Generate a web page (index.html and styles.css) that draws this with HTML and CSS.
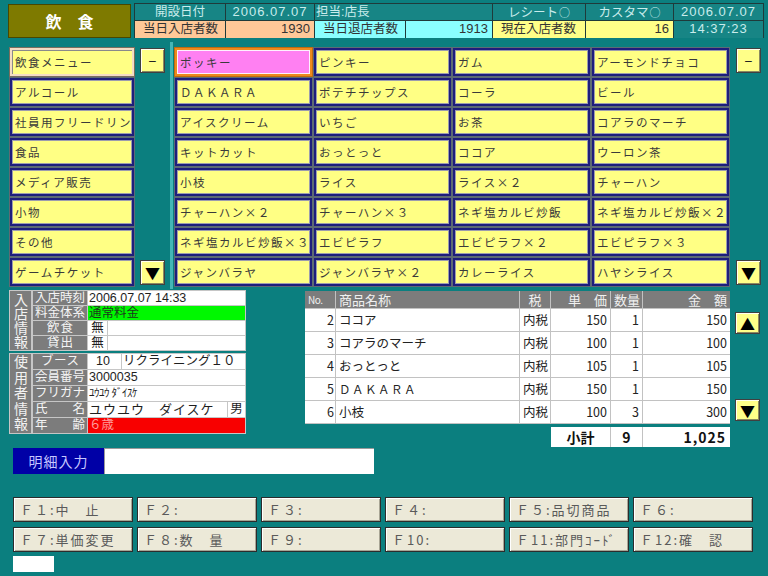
FILE: index.html
```html
<!DOCTYPE html>
<html lang="ja">
<head>
<meta charset="utf-8">
<title>飲食</title>
<link rel="stylesheet" href="styles.css">
</head>
<body>
<div class="screen">
  <header class="top">
    <div class="title">飲　食</div>
    <div class="stats">
      <div class="c teal">開設日付</div>
      <div class="c teal date">2006.07.07</div>
      <div class="c teal tight span2">担当:店長</div>
      <div class="c teal">レシート<span class="circ">○</span></div>
      <div class="c teal">カスタマ<span class="circ">○</span></div>
      <div class="c teal date">2006.07.07</div>
      <div class="c peach left">当日入店者数</div>
      <div class="c peach num">1930</div>
      <div class="c cyan left">当日退店者数</div>
      <div class="c cyan num">1913</div>
      <div class="c yellow left">現在入店者数</div>
      <div class="c yellow num">16</div>
      <div class="c teal date">14:37:23</div>
    </div>
  </header>

  <section class="menu-area">
    <div class="cats">
      <div class="btn cat-sel">飲食メニュー</div>
      <div class="btn">アルコール</div>
      <div class="btn">社員用フリードリンク</div>
      <div class="btn">食品</div>
      <div class="btn">メディア販売</div>
      <div class="btn">小物</div>
      <div class="btn">その他</div>
      <div class="btn">ゲームチケット</div>
    </div>
    <div class="mini-col">
      <div class="mini">−</div>
      <div class="mini arrow">▼</div>
    </div>
    <div class="sep"></div>
    <div class="products">
      <div class="btn sel">ポッキー</div>
      <div class="btn">ピンキー</div>
      <div class="btn">ガム</div>
      <div class="btn">アーモンドチョコ</div>
      <div class="btn">ＤＡＫＡＲＡ</div>
      <div class="btn">ポテチチップス</div>
      <div class="btn">コーラ</div>
      <div class="btn">ビール</div>
      <div class="btn">アイスクリーム</div>
      <div class="btn">いちご</div>
      <div class="btn">お茶</div>
      <div class="btn">コアラのマーチ</div>
      <div class="btn">キットカット</div>
      <div class="btn">おっとっと</div>
      <div class="btn">ココア</div>
      <div class="btn">ウーロン茶</div>
      <div class="btn">小枝</div>
      <div class="btn">ライス</div>
      <div class="btn">ライス×２</div>
      <div class="btn">チャーハン</div>
      <div class="btn">チャーハン×２</div>
      <div class="btn">チャーハン×３</div>
      <div class="btn">ネギ塩カルビ炒飯</div>
      <div class="btn">ネギ塩カルビ炒飯×２</div>
      <div class="btn">ネギ塩カルビ炒飯×３</div>
      <div class="btn">エビピラフ</div>
      <div class="btn">エビピラフ×２</div>
      <div class="btn">エビピラフ×３</div>
      <div class="btn">ジャンバラヤ</div>
      <div class="btn">ジャンバラヤ×２</div>
      <div class="btn">カレーライス</div>
      <div class="btn">ハヤシライス</div>
    </div>
    <div class="mini-col right">
      <div class="mini">−</div>
      <div class="mini arrow">▼</div>
    </div>
  </section>

  <section class="middle">
    <div class="info">
      <div class="panel p1">
        <div class="vlabel"><span class="vtext">入店情報</span></div>
        <div class="rows">
          <div class="row"><div class="lab">入店時刻</div><div class="val">2006.07.07 14:33</div></div>
          <div class="row"><div class="lab">料金体系</div><div class="val green">通常料金</div></div>
          <div class="row"><div class="lab narrow">飲食</div><div class="val box">無</div><div class="val"></div></div>
          <div class="row"><div class="lab narrow">貸出</div><div class="val box">無</div><div class="val"></div></div>
        </div>
      </div>
      <div class="panel p2">
        <div class="vlabel"><span class="vtext">使用者情報</span></div>
        <div class="rows">
          <div class="row"><div class="lab mid">ブース</div><div class="val booth">10</div><div class="val">リクライニング１０</div></div>
          <div class="row"><div class="lab">会員番号</div><div class="val">3000035</div></div>
          <div class="row"><div class="lab">フリガナ</div><div class="val kana">ﾕｳﾕｳ ﾀﾞｲｽｹ</div></div>
          <div class="row"><div class="lab">氏　名</div><div class="val name">ユウユウ　ダイスケ</div><div class="val sex">男</div></div>
          <div class="row"><div class="lab">年　齢</div><div class="val red">６歳</div></div>
        </div>
      </div>
    </div>

    <div class="order">
      <div class="tgrid">
        <div class="th small">No.</div>
        <div class="th lt">商品名称</div>
        <div class="th ctr">税</div>
        <div class="th rt">単　価</div>
        <div class="th ctr">数量</div>
        <div class="th rt">金　額</div>

        <div class="td rt">2</div><div class="td">ココア</div><div class="td ctr">内税</div><div class="td rt">150</div><div class="td rt">1</div><div class="td rt">150</div>
        <div class="td rt">3</div><div class="td">コアラのマーチ</div><div class="td ctr">内税</div><div class="td rt">100</div><div class="td rt">1</div><div class="td rt">100</div>
        <div class="td rt">4</div><div class="td">おっとっと</div><div class="td ctr">内税</div><div class="td rt">105</div><div class="td rt">1</div><div class="td rt">105</div>
        <div class="td rt">5</div><div class="td spaced">ＤＡＫＡＲＡ</div><div class="td ctr">内税</div><div class="td rt">150</div><div class="td rt">1</div><div class="td rt">150</div>
        <div class="td rt">6</div><div class="td">小枝</div><div class="td ctr">内税</div><div class="td rt">100</div><div class="td rt">3</div><div class="td rt">300</div>
      </div>
      <div class="sub">
        <div class="sc ctr">小計</div>
        <div class="sc ctr">9</div>
        <div class="sc rt">1,025</div>
      </div>
    </div>

    <div class="obtns">
      <div class="mini arrow">▲</div>
      <div class="mini arrow">▼</div>
    </div>
  </section>

  <div class="detail">
    <div class="dlabel">明細入力</div>
    <div class="dinput"></div>
  </div>

  <div class="fkeys">
    <div class="fk">Ｆ１:中　止</div>
    <div class="fk">Ｆ２:</div>
    <div class="fk">Ｆ３:</div>
    <div class="fk">Ｆ４:</div>
    <div class="fk">Ｆ５:品切商品</div>
    <div class="fk">Ｆ６:</div>
    <div class="fk">Ｆ７:単価変更</div>
    <div class="fk">Ｆ８:数　量</div>
    <div class="fk">Ｆ９:</div>
    <div class="fk">Ｆ10:</div>
    <div class="fk">Ｆ11:部門ｺｰﾄﾞ</div>
    <div class="fk">Ｆ12:確　認</div>
  </div>

  <div class="status"></div>
</div>
</body>
</html>
```

FILE: styles.css
```css
* { box-sizing: border-box; margin: 0; padding: 0; }

html, body { width: 768px; height: 576px; overflow: hidden; }

body {
  background: #0b7f7f;
  font-family: "Noto Sans CJK JP", "Noto Sans", sans-serif;
  font-size: 12px;
  color: #333;
}

.screen {
  width: 768px;
  height: 576px;
  padding-top: 3px;
  display: flex;
  flex-direction: column;
}

/* ---------- header ---------- */
.top {
  display: flex;
  gap: 3px;
  margin-left: 8px;
  height: 35px;
}

.title {
  width: 123px;
  height: 34px;
  margin-top: 1px;
  background: #7e7a00;
  border: 1px solid #4a4700;
  color: #fff;
  font-weight: bold;
  font-size: 16px;
  display: flex;
  align-items: center;
  justify-content: center;
}

.stats {
  display: grid;
  grid-template-columns: 90px 88px 90px 86px 92px 87px 89px;
  grid-template-rows: 16px 17px;
  gap: 1px;
  background: #1f3a3a;
  border: 1px solid #1f3a3a;
  font-family: "Liberation Sans", "Noto Sans CJK JP", sans-serif;
}

.c {
  font-size: 12.5px;
  line-height: 16px;
  white-space: nowrap;
  padding: 0 4px;
}
.c.span2 { grid-column: span 2; }
.circ { font-family: "Noto Sans CJK JP", sans-serif; font-size: 11px; margin-left: 1px; }
.teal { background: #178585; color: #c9ecec; text-align: center; }
.teal.tight { text-align: left; padding-left: 1px; }
.date { letter-spacing: 1px; font-size: 13px; padding: 0 2px; }
.peach { background: #ffc898; }
.cyan { background: #8affff; }
.yellow { background: #ffff88; }
.left { text-align: left; padding-left: 8px; }
.num { text-align: right; font-size: 13px; }

/* ---------- menu buttons ---------- */
.menu-area {
  display: flex;
  margin-top: 10px;
  padding-left: 10px;
  height: 238px;
}

.cats {
  width: 124px;
  display: grid;
  grid-template-rows: repeat(8, 28px);
  gap: 2px;
}

.products {
  margin-left: 2px;
  display: grid;
  grid-template-columns: repeat(4, 137px);
  grid-template-rows: repeat(8, 28px);
  gap: 2px;
}

.btn {
  background: #ffff84;
  border: 2px solid #1e1e7c;
  box-shadow: inset 0 0 0 1px #9c9cae, 0 0 0 1px #5d6b74;
  color: #3a3a3a;
  font-size: 11.5px;
  letter-spacing: 1.5px;
  line-height: 24px;
  padding-left: 3px;
  white-space: nowrap;
  overflow: hidden;
}

.btn.sel {
  background: #ff80f2;
  border: 2px solid #ee8a1c;
  box-shadow: inset 0 0 0 1px #fff0ff, 0 0 0 1px #c06a10;
}

.btn.cat-sel {
  border: 2px solid #f3dcc4;
  box-shadow: inset 1px 1px 0 #8a8a8a, 0 0 0 1px #7a6e5e;
}

.mini-col {
  width: 25px;
  margin-left: 6px;
  display: flex;
  flex-direction: column;
  justify-content: space-between;
  padding-bottom: 1px;
}
.mini-col.right { margin-left: 7px; }

.mini {
  height: 25px;
  background: #ffff88;
  border: 1px solid #404040;
  box-shadow: inset 1px 1px 0 #fffff0, inset -1px -1px 0 #8a8a60;
  color: #222;
  font-size: 14px;
  display: flex;
  align-items: center;
  justify-content: center;
}
.mini.arrow { font-size: 15px; color: #000; }

.sep {
  width: 3px;
  margin-left: 5px;
  margin-top: -6px;
  margin-bottom: -3px;
  background: #44b6b6;
}

/* ---------- middle ---------- */
.middle {
  display: flex;
  margin-top: 4px;
  height: 155px;
}

.info {
  margin-left: 9px;
  width: 237px;
  display: flex;
  flex-direction: column;
  gap: 2px;
  font-family: "Liberation Sans", "Noto Sans CJK JP", sans-serif;
}

.panel {
  display: flex;
  gap: 2px;
  padding: 1px;
  background: #c6c6c6;
}

.vlabel {
  width: 21px;
  background: #7c7c7c;
  display: flex;
  align-items: center;
  justify-content: center;
}

.vtext {
  writing-mode: vertical-rl;
  text-orientation: upright;
  color: #f2f2f2;
  font-family: "Noto Sans CJK JP", sans-serif;
  font-size: 14px;
  line-height: 21px;
}
.p2 .vtext { letter-spacing: 1.5px; }

.rows {
  flex: 1;
  display: flex;
  flex-direction: column;
  gap: 1px;
}

.row {
  display: flex;
  gap: 1px;
  height: 14px;
}
.p2 .row { height: 15px; }

.lab {
  width: 54px;
  flex: none;
  background: #7c7c7c;
  color: #f4f4f4;
  font-size: 12.5px;
  line-height: 14px;
  padding: 0 2px;
  text-align: justify;
  text-align-last: justify;
  white-space: nowrap;
}
.lab.narrow { padding: 0 14px; }
.lab.mid { padding: 0 8px; }
.p2 .lab { line-height: 15px; }

.val {
  flex: 1;
  background: #fff;
  color: #1e1e1e;
  font-size: 12.5px;
  line-height: 14px;
  padding-left: 1px;
  white-space: nowrap;
}
.p2 .val { line-height: 15px; }
.val.green { background: #00f800; color: #1c3a1c; }
.val.box { flex: none; width: 19px; text-align: center; padding: 0; }
.val.booth { flex: none; width: 33px; padding-left: 8px; }
.val.kana { font-size: 11px; letter-spacing: -0.5px; }
.val.name { font-size: 13px; letter-spacing: 1px; }
.val.sex { flex: none; width: 17px; text-align: center; padding: 0; font-size: 12.5px; }
.val.red { background: #f80000; color: #ff9a9a; }

/* ---------- order table ---------- */
.order {
  margin-left: 59px;
  margin-top: 1px;
  width: 425px;
}

.tgrid {
  display: grid;
  grid-template-columns: 30px 183px 30px 59px 31px 87px;
  grid-template-rows: 17px;
  grid-auto-rows: 22px;
  gap: 1px;
  background: #c2c2c2;
  border-bottom: 1px solid #c2c2c2;
}

.th {
  background: #7c7c7c;
  color: #f0f0f0;
  font-size: 13px;
  line-height: 17px;
  padding: 0 3px;
  white-space: nowrap;
}
.th.small { font-size: 10px; letter-spacing: -0.5px; }

.td {
  background: #fff;
  color: #222;
  font-size: 12.5px;
  line-height: 22px;
  padding: 0 3px;
  white-space: nowrap;
}
.td.spaced { letter-spacing: 1.5px; font-size: 11.5px; }
.td:nth-child(6n+1) { padding: 0 1px 0 0; }

.lt { text-align: left; }
.rt { text-align: right; }
.ctr { text-align: center; }

.sub {
  margin-top: 3px;
  margin-left: 246px;
  display: grid;
  grid-template-columns: 59px 31px 87px;
  grid-template-rows: 20px;
  gap: 1px;
  background: #c2c2c2;
  width: 179px;
}

.sc {
  background: #fff;
  color: #111;
  font-size: 14px;
  font-weight: bold;
  line-height: 20px;
  padding: 0 4px;
}
.sc.rt { letter-spacing: 1px; }

.obtns {
  margin-left: 5px;
  padding-top: 22px;
  display: flex;
  flex-direction: column;
  gap: 65px;
}
.obtns .mini { width: 25px; height: 22px; }

/* ---------- detail input ---------- */
.detail {
  display: flex;
  margin-top: 3px;
  margin-left: 13px;
  height: 26px;
}

.dlabel {
  width: 91px;
  background: #0000a6;
  color: #c6c6ff;
  font-size: 14px;
  letter-spacing: 1px;
  line-height: 26px;
  text-align: center;
}

.dinput {
  width: 270px;
  background: #fff;
  border-top: 1px solid #9a9a9a;
  border-left: 1px solid #9a9a9a;
}

/* ---------- function keys ---------- */
.fkeys {
  margin-top: 23px;
  margin-left: 13px;
  display: grid;
  grid-template-columns: repeat(6, 120px);
  grid-template-rows: 25px 25px;
  column-gap: 4px;
  row-gap: 5px;
}

.fk {
  background: #ece9d8;
  border: 1px solid #2c2c2c;
  box-shadow: inset 1px 1px 0 #ffffff, inset -1px -1px 0 #a8a595;
  color: #5a5a5a;
  font-size: 13px;
  letter-spacing: 2px;
  line-height: 23px;
  padding-left: 6px;
  white-space: nowrap;
}

.status {
  margin-top: 4px;
  margin-left: 13px;
  width: 41px;
  height: 16px;
  background: #fff;
}
```
